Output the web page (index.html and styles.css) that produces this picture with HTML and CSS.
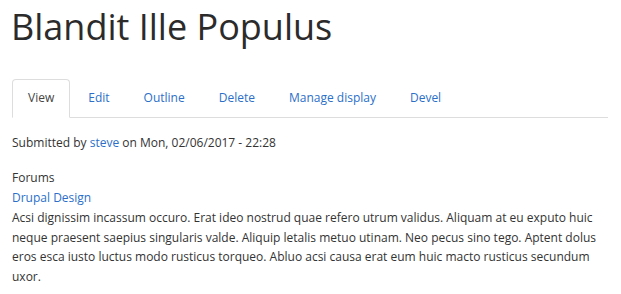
FILE: index.html
```html
<!DOCTYPE html>
<html lang="en">
<head>
    <meta charset="UTF-8">
    <meta name="viewport" content="width=device-width, initial-scale=1.0">
    <title>Blandit Ille Populus</title>
    <link rel="stylesheet" href="styles.css">
</head>
<body>

<div class="page">
    <h1 class="page-title">Blandit Ille Populus</h1>

    <ul class="tabs">
        <li class="active"><a href="#">View</a></li>
        <li><a href="#">Edit</a></li>
        <li><a href="#">Outline</a></li>
        <li><a href="#">Delete</a></li>
        <li><a href="#">Manage display</a></li>
        <li><a href="#">Devel</a></li>
    </ul>

    <div class="node">
        <p class="submitted">Submitted by <a href="#">steve</a> on Mon, 02/06/2017 - 22:28</p>

        <div class="field">
            <div class="field-label">Forums</div>
            <div class="field-item"><a href="#">Drupal Design</a></div>
        </div>

        <p class="body">Acsi dignissim incassum occuro. Erat ideo nostrud quae refero utrum validus. Aliquam at eu exputo huic neque praesent saepius singularis valde. Aliquip letalis metuo utinam. Neo pecus sino tego. Aptent dolus eros esca iusto luctus modo rusticus torqueo. Abluo acsi causa erat eum huic macto rusticus secundum uxor.</p>
    </div>
</div>

</body>
</html>
```

FILE: styles.css
```css
body {
    font-family: 'Open Sans', sans-serif;
    font-size: 12px;
    line-height: 1.5;
    color: #333;
    margin: 0;
    padding: 0;
    background-color: #fff;
}
a {
    color: #2b6fc9;
    text-decoration: none;
}
.page {
    padding: 1px 13px 0 12px;
}
.page-title {
    font-size: 36px;
    font-weight: normal;
    line-height: 52px;
    color: #2b2b2b;
    margin: 0 0 26px -1px;
}
.tabs {
    display: flex;
    gap: 2px;
    list-style: none;
    margin: 0;
    padding: 0;
    border-bottom: 1px solid #ddd;
}
.tabs li {
    margin-bottom: -1px;
}
.tabs a {
    display: block;
    padding: 9px 15px 10px;
    line-height: 18px;
    border: 1px solid transparent;
    border-radius: 4px 4px 0 0;
}
.tabs .active a {
    color: #444;
    background: #fff;
    border-color: #ddd;
    border-bottom-color: #fff;
}
.node {
    padding-top: 15px;
}
.submitted {
    margin: 0 0 15px;
    line-height: 20px;
}
.field-label {
    line-height: 20px;
}
.field-item {
    line-height: 20px;
}
.body {
    margin: 0;
    line-height: 19.7px;
}
```
